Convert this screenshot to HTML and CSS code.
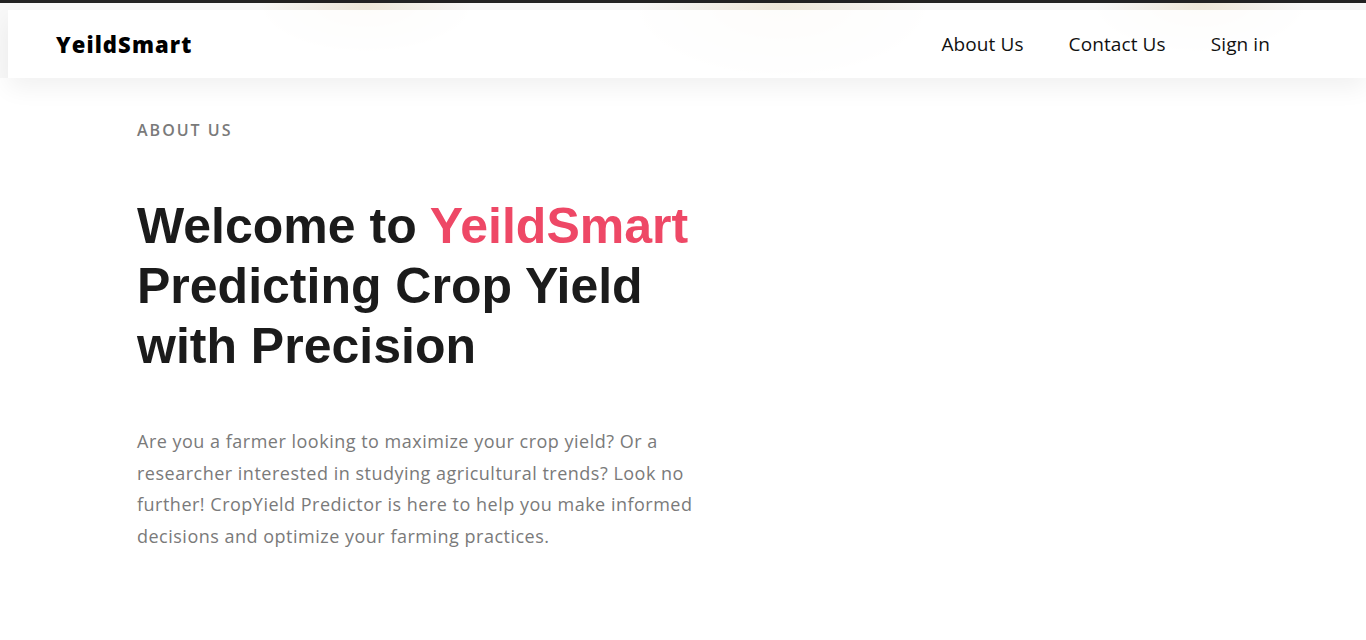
FILE: index.html
```html
<!DOCTYPE html>
<html lang="en">
<head>
<meta charset="utf-8">
<title>YeildSmart</title>
<link rel="stylesheet" href="styles.css">
</head>
<body>
<div class="topbar"></div>
<header class="header">
  <nav class="navbar">
    <a class="logo" href="#">YeildSmart</a>
    <ul class="nav-links">
      <li><a href="#">About Us</a></li>
      <li><a href="#">Contact Us</a></li>
      <li><a href="#">Sign in</a></li>
    </ul>
  </nav>
</header>
<main class="about">
  <p class="eyebrow">ABOUT US</p>
  <h1 class="title">Welcome to <span class="brand">YeildSmart</span><br>Predicting Crop Yield<br>with Precision</h1>
  <p class="lead">Are you a farmer looking to maximize your crop yield? Or a researcher interested in studying agricultural trends? Look no further! CropYield Predictor is here to help you make informed decisions and optimize your farming practices.</p>
</main>
</body>
</html>
```
FILE: styles.css
```css
html, body {
  margin: 0;
  padding: 0;
  background: #ffffff;
}

body {
  font-family: "Open Sans", "Noto Sans", sans-serif;
  color: #111;
}

.topbar {
  height: 3px;
  background: #222222;
}

.header {
  padding: 7px 0 0 8px;
  background:
    radial-gradient(ellipse 105px 48px at 366px 0, rgba(236, 228, 210, 0.85), rgba(236, 228, 210, 0) 100%),
    radial-gradient(ellipse 145px 72px at 782px 0, rgba(236, 228, 210, 0.85), rgba(236, 228, 210, 0) 100%),
    radial-gradient(ellipse 105px 48px at 1200px 0, rgba(236, 228, 210, 0.85), rgba(236, 228, 210, 0) 100%),
    #f8f8f8;
}

.navbar {
  height: 68px;
  display: flex;
  align-items: center;
  justify-content: space-between;
  padding: 0 96px 0 48px;
  background: rgba(255, 255, 255, 0.88);
  box-shadow: 0 10px 24px rgba(0, 0, 0, 0.06);
}

.logo {
  font-family: "Open Sans", sans-serif;
  font-weight: 800;
  font-size: 22px;
  letter-spacing: 1.1px;
  color: #000;
  text-decoration: none;
}

.nav-links {
  list-style: none;
  margin: 0;
  padding: 0;
  display: flex;
  gap: 45px;
}

.nav-links a {
  font-size: 19px;
  letter-spacing: 0.1px;
  color: #111;
  text-decoration: none;
}

.about {
  padding: 40px 0 60px 137px;
  max-width: 570px;
}

.eyebrow {
  margin: 0;
  font-size: 16px;
  line-height: 24px;
  font-weight: 600;
  letter-spacing: 2px;
  color: #7a7a7a;
}

.title {
  margin: 54px 0 0;
  font-family: "Liberation Sans", Arial, sans-serif;
  font-weight: 700;
  font-size: 50px;
  line-height: 60px;
  color: #1b1b1b;
}

.brand {
  color: #ee4866;
}

.lead {
  margin: 50px 0 0;
  font-size: 18px;
  letter-spacing: 0.5px;
  line-height: 31.5px;
  color: #7a7a7a;
}
```
